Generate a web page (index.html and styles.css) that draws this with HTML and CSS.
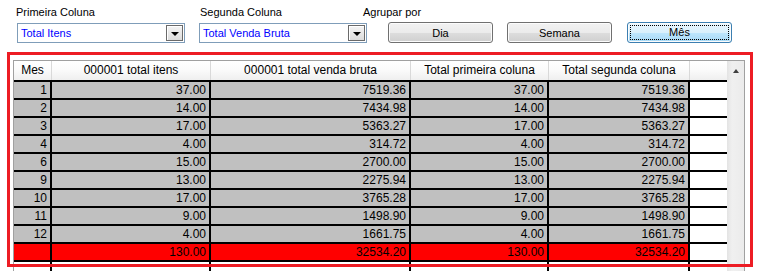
FILE: index.html
```html
<!DOCTYPE html>
<html lang="pt">

<head>
  <meta charset="UTF-8">
  <title>Totais por mes</title>
  <link rel="stylesheet" href="styles.css">
</head>

<body>
  <div class="labels">
    <span class="caption cap-first">Primeira Coluna</span>
    <span class="caption cap-second">Segunda Coluna</span>
    <span class="caption">Agrupar por</span>
  </div>

  <div class="controls">
    <div class="combo combo-first">
      <span class="combo-text">Total Itens</span>
      <span class="combo-btn"><i class="tri-down"></i></span>
    </div>
    <div class="combo combo-second">
      <span class="combo-text">Total Venda Bruta</span>
      <span class="combo-btn"><i class="tri-down"></i></span>
    </div>
    <div class="buttons">
      <button class="btn">Dia</button>
      <button class="btn">Semana</button>
      <button class="btn btn-active"><span class="focus">Mês</span></button>
    </div>
  </div>

  <div class="grid-box">
    <div class="rows" id="rows">
      <div class="row head">
        <div class="cell">Mes</div>
        <div class="cell">000001 total itens</div>
        <div class="cell">000001 total venda bruta</div>
        <div class="cell">Total primeira coluna</div>
        <div class="cell">Total segunda coluna</div>
        <div class="cell"></div>
      </div>
    </div>
    <div class="scrollbar">
      <div class="arrow-up"><i class="tri-up"></i></div>
    </div>
  </div>

  <!-- marcação vermelha por cima da grade -->
  <div class="highlight"></div>

  <script>
const rowsBox = document.getElementById('rows');

let dados = [
  ['1', '37.00', '7519.36', '37.00', '7519.36'],
  ['2', '14.00', '7434.98', '14.00', '7434.98'],
  ['3', '17.00', '5363.27', '17.00', '5363.27'],
  ['4', '4.00', '314.72', '4.00', '314.72'],
  ['6', '15.00', '2700.00', '15.00', '2700.00'],
  ['9', '13.00', '2275.94', '13.00', '2275.94'],
  ['10', '17.00', '3765.28', '17.00', '3765.28'],
  ['11', '9.00', '1498.90', '9.00', '1498.90'],
  ['12', '4.00', '1661.75', '4.00', '1661.75'],
];

// linha de dados
function addRow(values, cls) {
  let html = `<div class="row ${cls}">`;
  values.forEach(v => {
    html += `<div class="cell">${v}</div>`;
  });
  html += `<div class="cell cell-empty"></div></div>`;
  rowsBox.innerHTML += html;
}

dados.forEach(item => addRow(item, 'data'));
addRow(['', '130.00', '32534.20', '130.00', '32534.20'], 'total');
addRow(['', '', '', '', ''], 'blank');
  </script>
</body>

</html>
```

FILE: styles.css
```css
* {
  margin: 0;
  padding: 0;
  box-sizing: border-box;
}

body {
  background: #fff;
  font-family: "Liberation Sans", Arial, sans-serif;
  color: #000;
  overflow: hidden;
  position: relative;
  height: 271px;
}

/* barra de cima */
.labels {
  display: flex;
  padding: 6px 0 0 16px;
  font-size: 11px;
  line-height: 13px;
}
.cap-first {
  width: 184px;
}
.cap-second {
  width: 163px;
}

.controls {
  display: flex;
  align-items: flex-start;
  margin-top: 3px;
  padding-left: 17px;
  height: 38px;
}

.combo {
  position: relative;
  width: 168px;
  height: 20px;
  margin-top: 1px;
  border: 1px solid #7f9db9;
  background: #fff;
}
.combo-first {
  margin-right: 14px;
}
.combo-second {
  margin-right: 21px;
}
.combo-text {
  display: block;
  padding-left: 3px;
  font-size: 11px;
  line-height: 18px;
  color: #0000ff;
}
.combo-btn {
  position: absolute;
  right: 1px;
  top: 1px;
  width: 17px;
  height: 16px;
  border: 1px solid #6a6a6a;
  background: linear-gradient(#f4f4f4, #dcdcdc);
  box-shadow: inset 1px 1px 0 #fff;
  display: flex;
  align-items: center;
  justify-content: center;
}
.tri-down {
  width: 0;
  height: 0;
  border-left: 4px solid transparent;
  border-right: 4px solid transparent;
  border-top: 4px solid #000;
  margin-top: 2px;
}

.buttons {
  display: flex;
  gap: 14px;
}
.btn {
  width: 105px;
  height: 21px;
  border: 1px solid #707070;
  border-radius: 3px;
  background: linear-gradient(#f2f2f2 0%, #ebebeb 50%, #dddddd 51%, #cfcfcf 100%);
  box-shadow: inset 0 0 0 1px #fcfcfc;
  font-family: "Liberation Sans", Arial, sans-serif;
  font-size: 11px;
  color: #000;
}
.btn-active {
  margin-left: 1px;
  border-color: #3c7fb1;
  background: linear-gradient(#eaf6fd 0%, #d9f0fc 50%, #bee6fd 51%, #a7d9f5 100%);
  padding: 2px;
}
.focus {
  display: block;
  height: 100%;
  border: 1px dotted #000;
  line-height: 13px;
}

/* grade */
.grid-box {
  display: flex;
  width: 732px;
  margin-left: 13px;
  border: 1px solid #a0a0a0;
  border-bottom: none;
  font-size: 12px;
}
.rows {
  width: 713px;
}
.row {
  display: grid;
  grid-template-columns: 38px 159px 200px 138px 141px 37px;
}
.head {
  height: 19px;
  background: linear-gradient(#ffffff 0%, #fbfbfb 45%, #efefef 100%);
}
.head .cell {
  border-right: 1px solid #d9d9d9;
  text-align: center;
  line-height: 19px;
}
.head .cell:last-child {
  border-right: none;
}

.data, .total, .blank {
  height: 18px;
}
.data .cell, .total .cell, .blank .cell {
  border-top: 2px solid #000;
  border-right: 2px solid #000;
  line-height: 16px;
  text-align: right;
  padding-right: 3px;
  white-space: nowrap;
}
.data .cell {
  background: #c0c0c0;
}
.total .cell {
  background: #ff0000;
}
.blank .cell {
  background: #fff;
}
.row .cell-empty {
  background: #fff;
  border-right: none;
}

.scrollbar {
  width: 17px;
  background: linear-gradient(to right, #e3e3e3, #f0f0f0 30%, #ebebeb);
}
.arrow-up {
  height: 19px;
  display: flex;
  align-items: center;
  justify-content: center;
}
.tri-up {
  width: 0;
  height: 0;
  border-left: 3.5px solid transparent;
  border-right: 3.5px solid transparent;
  border-bottom: 4px solid #404040;
}

.highlight {
  position: absolute;
  left: 7px;
  top: 52px;
  width: 746px;
  height: 215px;
  border: 3px solid #ed1c24;
}
```
